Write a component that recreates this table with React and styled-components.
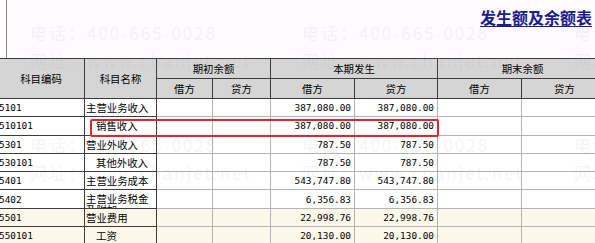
import React from 'react';
import styled, { createGlobalStyle } from 'styled-components';

const GlobalStyle = createGlobalStyle`
  html, body { margin: 0; padding: 0; background: #fff; }
  body { font-family: "Noto Sans CJK SC", "Noto Sans", sans-serif; }
`;

const rows = [
  { code: '5101', name: '主营业务收入', debit: '387,080.00', credit: '387,080.00' },
  { code: '510101', name: '销售收入', sub: true, debit: '387,080.00', credit: '387,080.00' },
  { code: '5301', name: '营业外收入', debit: '787.50', credit: '787.50' },
  { code: '530101', name: '其他外收入', sub: true, debit: '787.50', credit: '787.50' },
  { code: '5401', name: '主营业务成本', debit: '543,747.80', credit: '543,747.80' },
  { code: '5402', name: '主营业务税金及附加', wrap: true, debit: '6,356.83', credit: '6,356.83' },
  { code: '5501', name: '营业费用', tint: true, debit: '22,998.76', credit: '22,998.76' },
  { code: '550101', name: '工资', sub: true, tint: true, debit: '20,130.00', credit: '20,130.00' },
];

const Page = styled.div`
  position: relative;
  width: 595px;
  height: 243px;
  overflow: hidden;
`;

const TopPanel = styled.div`
  height: 58px;
  margin-left: 6px;
  border-left: 1px solid #8a8a8a;
  background: #fdfbfd;
  display: flex;
  justify-content: flex-end;
  align-items: flex-start;
  padding: 6px 3px 0 0;
  box-sizing: border-box;
`;

const Title = styled.div`
  font-size: 16px;
  line-height: 22px;
  color: #1c1c8a;
  font-weight: 700;
  text-decoration: underline;
  text-underline-offset: 2px;
`;

const TableWrap = styled.div`
  position: relative;
  margin-left: -3px;
`;

const Grid = styled.table`
  border-collapse: collapse;
  table-layout: fixed;
  width: 610px;
  font-size: 10.4px;
  color: #000;
`;

const HeadCell = styled.th`
  background: #d5d5d5;
  border: 1px solid #3c3c3c;
  font-weight: 400;
  height: 19px;
  padding: 0;
  text-align: center;
  line-height: 12px;
`;

const BodyRow = styled.tr`
  height: 18.3px;
  background: ${p => (p.$tint ? '#fdf7ea' : '#fff')};
`;

const Cell = styled.td`
  padding: 0;
  border: 1px solid ${p => (p.$dark ? '#3c3c3c' : '#b4b4b4')};
  vertical-align: middle;
  overflow: hidden;
`;

const Code = styled.div`
  font-family: "DejaVu Sans Mono", monospace;
  font-size: 9.4px;
  padding-left: 1px;
  white-space: nowrap;
`;

const Name = styled.div`
  height: 17px;
  overflow: hidden;
  box-sizing: border-box;
  line-height: ${p => (p.$wrap ? '11.5px' : '17px')};
  padding-top: ${p => (p.$wrap ? '2px' : '0')};
  padding-left: ${p => (p.$sub ? '11px' : '1px')};
`;

const Amount = styled.div`
  font-family: "DejaVu Sans Mono", monospace;
  font-size: 9.4px;
  text-align: right;
  padding-right: 3px;
  white-space: nowrap;
`;

const Highlight = styled.div`
  position: absolute;
  left: 93px;
  top: 61px;
  width: 349px;
  height: 18px;
  border: 2px solid #e0262a;
  border-radius: 2px;
  box-sizing: border-box;
  pointer-events: none;
`;

const Watermark = styled.div`
  position: absolute;
  inset: 0;
  pointer-events: none;
  display: grid;
  grid-template-columns: repeat(3, 272px);
  grid-auto-rows: 112px;
  padding: 19px 0 0 30px;
  color: rgba(150, 150, 150, 0.11);
  font-size: 17px;
  letter-spacing: 2px;
  line-height: 28px;
  white-space: nowrap;
`;

const Tile = styled.div`
  display: flex;
  flex-direction: column;
`;

export default function App() {
  const tiles = Array.from({ length: 6 });
  return (
    <Page>
      <GlobalStyle />
      <TopPanel>
        <Title>发生额及余额表</Title>
      </TopPanel>
      <TableWrap>
        <Grid>
          <colgroup>
            <col style={{ width: 87 }} />
            <col style={{ width: 72 }} />
            <col style={{ width: 56 }} />
            <col style={{ width: 58 }} />
            <col style={{ width: 84 }} />
            <col style={{ width: 83 }} />
            <col style={{ width: 84 }} />
            <col style={{ width: 86 }} />
          </colgroup>
          <thead>
            <tr>
              <HeadCell rowSpan={2}>科目编码</HeadCell>
              <HeadCell rowSpan={2}>科目名称</HeadCell>
              <HeadCell colSpan={2}>期初余额</HeadCell>
              <HeadCell colSpan={2}>本期发生</HeadCell>
              <HeadCell colSpan={2}>期末余额</HeadCell>
            </tr>
            <tr>
              <HeadCell>借方</HeadCell>
              <HeadCell>贷方</HeadCell>
              <HeadCell>借方</HeadCell>
              <HeadCell>贷方</HeadCell>
              <HeadCell>借方</HeadCell>
              <HeadCell>贷方</HeadCell>
            </tr>
          </thead>
          <tbody>
            {rows.map(r => (
              <BodyRow key={r.code} $tint={r.tint}>
                <Cell $dark><Code>{r.code}</Code></Cell>
                <Cell $dark>
                  <Name $sub={r.sub} $wrap={r.wrap}>{r.name}</Name>
                </Cell>
                <Cell />
                <Cell />
                <Cell><Amount>{r.debit}</Amount></Cell>
                <Cell><Amount>{r.credit}</Amount></Cell>
                <Cell />
                <Cell />
              </BodyRow>
            ))}
          </tbody>
        </Grid>
        <Highlight />
      </TableWrap>
      <Watermark>
        {tiles.map((_, i) => (
          <Tile key={i}>
            <span>电话：400-665-0028</span>
            <span>网址：www.chanjet.net</span>
          </Tile>
        ))}
      </Watermark>
    </Page>
  );
}
